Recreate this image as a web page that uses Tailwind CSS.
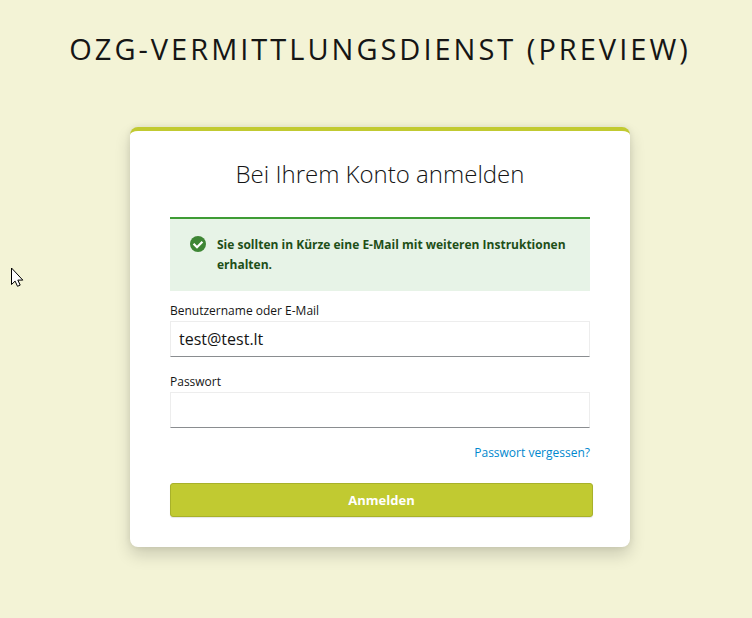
<!DOCTYPE html>
<html lang="de"><head><meta charset="utf-8"><title>Anmelden</title>
<script src="https://cdn.jsdelivr.net/npm/@tailwindcss/browser@4"></script></head>
<body class="relative h-[618px] overflow-hidden bg-[#f3f3d6] font-['Open_Sans',sans-serif] text-[#151515]">
<header class="flex h-[127px] justify-center pt-[29px] pl-[8px]"><h1 class="whitespace-nowrap text-[29px] leading-[40px] tracking-[3px] uppercase">OZG-Vermittlungsdienst (Preview)</h1></header>
<main class="ml-[130px] flex h-[420px] w-[500px] flex-col rounded-lg border-t-4 border-[#c1ca31] bg-white px-10 shadow-[0_8px_16px_rgba(3,3,3,0.16),0_0_6px_rgba(3,3,3,0.08)]">
<h2 class="mt-[26px] text-center text-2xl leading-[34px] font-light">Bei Ihrem Konto anmelden</h2>
<div class="mt-[26px] flex h-[74px] border-t-2 border-[#3f9c35] bg-[#e7f3e7] pt-4 pl-5">
<svg class="mt-[1px] -ml-[0.5px] h-4 w-4 shrink-0" viewBox="8 8 496 496" fill="#3e8635"><circle cx="256" cy="256" r="248"/><path d="m118 250 107 105 168-172" fill="none" stroke="#fff" stroke-width="68"/></svg>
<p class="ml-[11.5px] text-xs leading-5 font-bold text-[#1e4f18]">Sie sollten in Kürze eine E-Mail mit weiteren Instruktionen<br>erhalten.</p></div>
<form class="flex flex-col">
<label class="mt-[10px] h-5 text-xs leading-5">Benutzername oder E-Mail</label>
<input class="h-9 border border-[#ededed] border-b-[#8a8d90] px-2 text-base" value="test@test.lt">
<label class="mt-[15px] h-5 text-xs leading-5">Passwort</label>
<input type="password" class="h-9 border border-[#ededed] border-b-[#8a8d90] px-2">
<a class="mt-[15px] self-end text-xs leading-5 text-[#0088ce]">Passwort vergessen?</a>
<button type="button" class="mt-5 h-[34px] w-[423px] rounded-[3px] border border-[#a8b12a] bg-[#c1ca31] pt-0.5 text-[13px] font-bold text-white shadow-[0_1px_1px_rgba(3,3,3,0.1)]">Anmelden</button>
</form></main>
<svg class="absolute top-[267px] left-[11px] h-[20px] w-[13px]" viewBox="0 0 13 20"><path d="M.5 1v16.5l3.6-3.4 2.4 5.2 2.7-1.2-2.4-5h5z" fill="white" stroke="black"/></svg>
</body></html>
